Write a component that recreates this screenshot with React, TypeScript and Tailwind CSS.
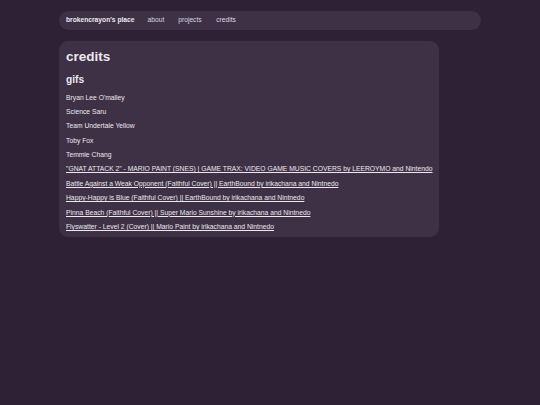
const gifs = [
  "Bryan Lee O'malley",
  "Science Saru",
  "Team Undertale Yellow",
  "Toby Fox",
  "Temmie Chang",
];

const music = [
  '"GNAT ATTACK 2" - MARIO PAINT (SNES) | GAME TRAX: VIDEO GAME MUSIC COVERS by LEEROYMO and Nintendo',
  "Battle Against a Weak Opponent (Faithful Cover) || EarthBound by irikachana and Nintnedo",
  "Happy-Happy is Blue (Faithful Cover) || EarthBound by irikachana and Nintnedo",
  "Pinna Beach (Faithful Cover) || Super Mario Sunshine by irikachana and Nintnedo",
  "Flyswatter - Level 2 (Cover) || Mario Paint by irikachana and Nintnedo",
];

export default function App() {
  return (
    <div className="min-h-screen bg-[#2e2136] text-[#ece8ee] font-['Liberation_Sans',Arial,sans-serif] pt-[11px]">
      <div className="mx-auto w-[422px]">
        <nav className="flex items-center h-[19px] rounded-full bg-[#3e3045] px-[7px] text-[6.7px]">
          <span className="font-bold mr-[13px]">brokencrayon's place</span>
          <a className="mr-[14px] text-[#dcd6e0]">about</a>
          <a className="mr-[14.5px] text-[#dcd6e0]">projects</a>
          <a className="text-[#dcd6e0]">credits</a>
        </nav>
        <main className="mt-[11px] w-[380px] rounded-[9px] bg-[#3e3045] px-[7px] pt-[7px] pb-[3px]">
          <h1 className="text-[13.5px] font-bold leading-[18px]">credits</h1>
          <h2 className="mt-[7px] text-[10.2px] font-bold leading-[14px]">gifs</h2>
          <ul className="mt-[3.5px] text-[6.75px] whitespace-nowrap">
            {gifs.map((g) => (
              <li key={g} className="h-[14.4px] leading-[14.4px]">
                {g}
              </li>
            ))}
            {music.map((m) => (
              <li key={m} className="h-[14.4px] leading-[14.4px]">
                <a className="underline">{m}</a>
              </li>
            ))}
          </ul>
        </main>
      </div>
    </div>
  );
}
